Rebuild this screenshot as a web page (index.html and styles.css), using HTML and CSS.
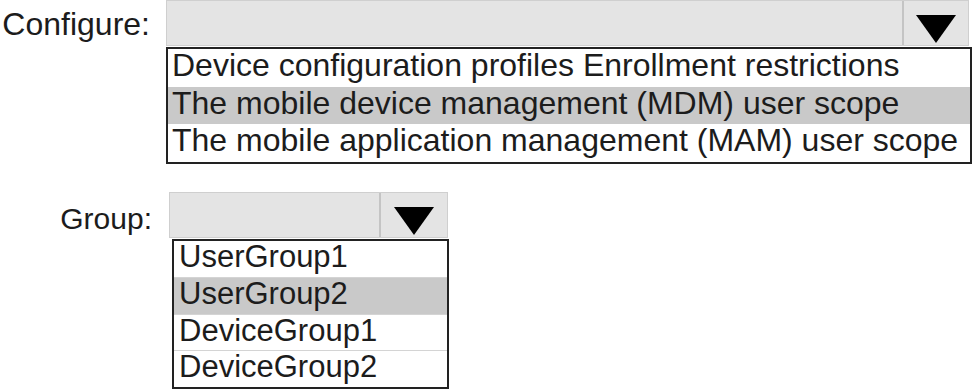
FILE: index.html
```html
<!DOCTYPE html>
<html lang="en">
<head>
    <meta charset="UTF-8">
    <meta name="viewport" content="width=device-width, initial-scale=1.0">
    <title>Configure</title>
    <link rel="stylesheet" href="styles.css">
</head>
<body>
    <div class="field field-configure">
        <label class="field-label">Configure:</label>
        <div class="dropdown">
            <div class="select">
                <div class="select-value"></div>
                <div class="select-arrow"><span class="triangle"></span></div>
            </div>
            <ul class="options">
                <li>Device configuration profiles Enrollment restrictions</li>
                <li class="selected">The mobile device management (MDM) user scope</li>
                <li>The mobile application management (MAM) user scope</li>
            </ul>
        </div>
    </div>

    <div class="field field-group">
        <label class="field-label">Group:</label>
        <div class="dropdown">
            <div class="select">
                <div class="select-value"></div>
                <div class="select-arrow"><span class="triangle"></span></div>
            </div>
            <ul class="options">
                <li>UserGroup1</li>
                <li class="selected">UserGroup2</li>
                <li>DeviceGroup1</li>
                <li>DeviceGroup2</li>
            </ul>
        </div>
    </div>
</body>
</html>
```

FILE: styles.css
```css
body {
    font-family: "Liberation Sans", Arial, sans-serif;
    color: #1c1c1c;
    background-color: #fff;
    margin: 0;
}

.field {
    display: grid;
    grid-template-columns: 166px auto;
    align-items: start;
}

.field-label {
    text-align: right;
    padding-right: 16px;
    font-size: 32px;
    padding-top: 6px;
}

.select {
    display: flex;
    height: 44px;
    background-color: #e4e4e4;
    border: 1px solid #cfcfcf;
}

.select-value {
    flex: 1;
}

.select-arrow {
    display: flex;
    justify-content: center;
    padding-top: 14px;
    border-left: 2px solid #c4c4c4;
}

.triangle {
    width: 0;
    height: 0;
    border-left: 20px solid transparent;
    border-right: 20px solid transparent;
    border-top: 28px solid #000;
}

.options {
    list-style: none;
    margin: 1px 0 0 0;
    padding: 0;
    border: 2px solid #222;
    background-color: #fff;
}

.options li {
    padding-left: 4px;
    white-space: nowrap;
}

.options li.selected {
    background-color: #c9c9c9;
}

/* Configure */
.field-configure .select {
    width: 801px;
}

.field-configure .select-arrow {
    width: 64px;
}

.field-configure .options {
    width: 802px;
}

.field-configure .options li {
    font-size: 32px;
    height: 37.5px;
    line-height: 32px;
    padding-bottom: 1px;
    box-sizing: border-box;
    padding-top: 0;
}

/* Group */
.field-group {
    margin-top: 28px;
}

.field-group .field-label {
    font-size: 30px;
    padding-top: 10px;
    padding-right: 14px;
}

.field-group .dropdown {
    margin-left: 3px;
}

.field-group .select {
    width: 277px;
}

.field-group .select-arrow {
    width: 66px;
}

.field-group .options {
    width: 273px;
    margin-left: 3px;
}

.field-group .options li {
    font-size: 31px;
    height: 36.5px;
    line-height: 32px;
    box-sizing: border-box;
    padding-left: 5px;
}

.field-group .options li + li {
    border-top: 1px solid #d4d4d4;
}
```
